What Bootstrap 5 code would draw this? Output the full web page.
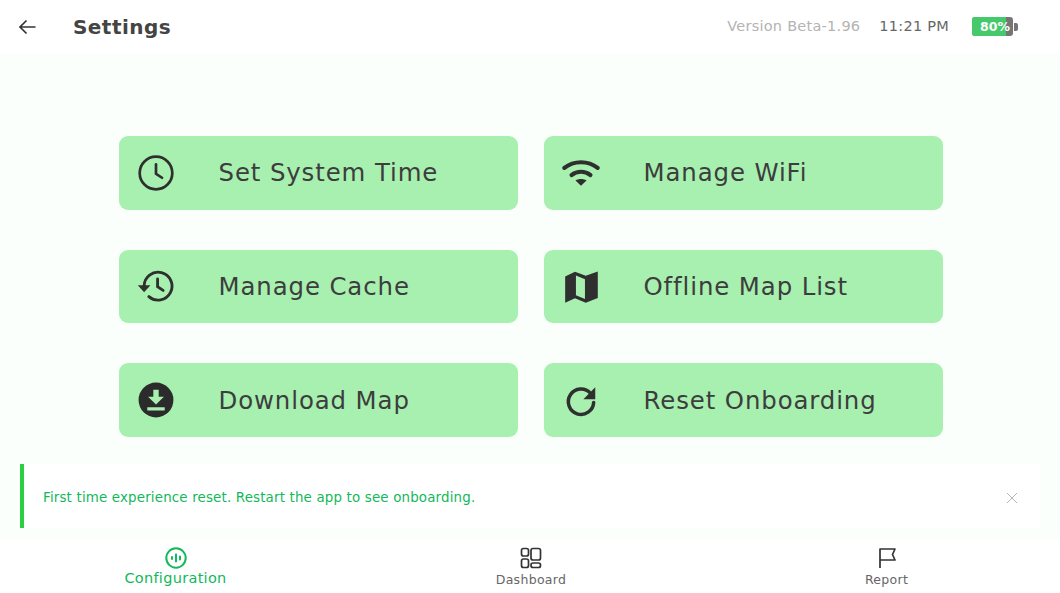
<!DOCTYPE html>
<html lang="en">
<head>
<meta charset="utf-8">
<title>Settings</title>
<link href="https://cdn.jsdelivr.net/npm/bootstrap@5.3.0/dist/css/bootstrap.min.css" rel="stylesheet">
<style>
html,body{height:593px;overflow:hidden}
body{font-family:"DejaVu Sans",sans-serif;background:#fbfffb;color:#3a3a3a}
.top-bar{height:53px;background:#fff;padding:0 42px 0 18px}
.top-title{font-size:20px;font-weight:700;color:#444;margin-left:37px;letter-spacing:.45px}
.ver{font-size:14.500px;color:#b3b3b3;letter-spacing:.25px}
.clock{font-size:14.500px;color:#666;margin-left:19px;letter-spacing:.25px}
.batt{margin-left:23px;width:46px;height:19px}
.batt-body{width:41px;height:19px;border-radius:3px;background:#757575;overflow:hidden}
.batt-fill{background:#46c96b;width:82%;height:100%}
.batt-text{color:#fff;font-size:12.500px;font-weight:700;left:8px;top:1px;line-height:17px}
.batt-tip{width:4px;height:8px;background:#757575;border-radius:0 2px 2px 0;margin-left:1px}
.main-area{height:487px}
.tile-grid{display:grid;grid-template-columns:399px 399px;grid-auto-rows:73.600px;gap:40px 26px;justify-content:center;padding-top:83px;padding-left:2px}
.tile{background:#a7f0b0;border-radius:9px;padding:0 0 0 18px;color:#3d3d3d;font-size:24.400px;letter-spacing:.9px;border:0;text-align:left}
.tile svg{flex:none;width:38px;height:38px}
.tile span{margin-left:43.500px;padding-top:2px}
.note{margin:27px 20px 0;height:64px;background:#fff;border-left:4px solid #2ccf3e;padding:5px 22px 0 19px;color:#12b85a;font-size:13.400px;letter-spacing:.17px}
.note svg{width:12px;height:12px}
.tabs{height:53px;background:#fff;padding-left:2px}
.tab{flex:none;color:#666;font-size:12.500px;letter-spacing:.3px;line-height:15px;width:355.500px;padding-top:6px}
.tab svg{width:24px;height:24px;margin-bottom:2px}
.tab.on{color:#12b85a;font-size:14.500px;line-height:17px}
.tab.on svg{margin-bottom:0}
</style>
</head>
<body>
<header class="top-bar d-flex align-items-center">
  <svg width="18" height="20" viewBox="0 0 18 20" fill="none" stroke="#333" stroke-width="1.700"><path d="M17.500 10H2M8.500 3.500 2 10l6.500 6.500"/></svg>
  <div class="top-title">Settings</div>
  <div class="ver ms-auto">Version Beta-1.96</div>
  <div class="clock">11:21 PM</div>
  <div class="batt d-flex align-items-center">
    <div class="batt-body position-relative">
      <div class="batt-fill"></div>
      <div class="batt-text position-absolute">80%</div>
    </div>
    <div class="batt-tip"></div>
  </div>
</header>
<main class="main-area">
  <div class="tile-grid">
    <button class="tile d-flex align-items-center">
      <svg viewBox="0 0 24 24" fill="none" stroke="#2f2f2f" stroke-width="1.700" stroke-linecap="round"><circle cx="12" cy="12" r="10.300"/><path d="M12 6.500v6l3.800 2.500"/></svg>
      <span>Set System Time</span>
    </button>
    <button class="tile d-flex align-items-center">
      <svg viewBox="0 0 24 24" fill="none" stroke="#2f2f2f" stroke-width="2.600" stroke-linecap="round"><path d="M1.500 8.800c6-4.800 15-4.800 21 0"/><path d="M6 13.300c3.500-2.800 8.500-2.800 12 0"/><path d="M12 20l-3.500-3.300c2-1.300 5-1.300 7 0z" fill="#2f2f2f" stroke="none"/></svg>
      <span>Manage WiFi</span>
    </button>
    <button class="tile d-flex align-items-center">
      <svg viewBox="0 0 24 24" fill="none" stroke="#2f2f2f" stroke-width="1.800"><path d="M4.500 12a8.800 8.800 0 1 1 3 6.700" stroke-linecap="round"/><path d="M.500 11.500h8l-4 4.500z" fill="#2f2f2f" stroke="none"/><path d="M13 7.500v5l3.500 2.300" stroke-linecap="round"/></svg>
      <span>Manage Cache</span>
    </button>
    <button class="tile d-flex align-items-center">
      <svg viewBox="0 0 24 24"><path d="M2 6 8.200 3 15 5.500 22.600 2.800V19.500L15 22.500 8.200 19.800 2 22.500z" fill="#2f2f2f"/><path d="M8.800 5.300l5.700 2.400v12.500l-5.700-2.300z" fill="#a7f0b0"/></svg>
      <span>Offline Map List</span>
    </button>
    <button class="tile d-flex align-items-center">
      <svg viewBox="0 0 24 24"><circle cx="12" cy="12" r="11" fill="#2b2b2b"/><path d="M10.300 5.500h3.400v4.500h3.300L12 14.800 7 10h3.300zM6.500 16.500h11v2.200h-11z" fill="#a7f0b0"/></svg>
      <span>Download Map</span>
    </button>
    <button class="tile d-flex align-items-center">
      <svg viewBox="0 0 24 24" fill="none" stroke="#2f2f2f" stroke-width="2.200"><path d="M18 7.800A8 8 0 1 0 20 13.500" stroke-linecap="round"/><path d="M21 4v7.500h-7.500z" fill="#2f2f2f" stroke="none"/></svg>
      <span>Reset Onboarding</span>
    </button>
  </div>
  <div class="note d-flex align-items-center justify-content-between">
    <div>First time experience reset. Restart the app to see onboarding.</div>
    <svg viewBox="0 0 12 12" fill="none" stroke="#b5b5b5" stroke-width="1"><path d="M1 1l10 10M11 1 1 11"/></svg>
  </div>
</main>
<nav class="tabs d-flex justify-content-center">
  <div class="tab on d-flex flex-column align-items-center justify-content-start">
    <svg viewBox="0 0 24 24" fill="none" stroke="#12b85a" stroke-width="2" stroke-linecap="round"><circle cx="12" cy="12" r="9.700"/><path d="M8 11v2M12 8.500v7M16 10.500v3"/></svg>
    <div>Configuration</div>
  </div>
  <div class="tab d-flex flex-column align-items-center justify-content-start">
    <svg viewBox="0 0 24 24" fill="none" stroke="#333" stroke-width="1.700"><rect x="2.500" y="2.500" width="7" height="7.500" rx="2"/><rect x="12" y="2.500" width="9.500" height="11.500" rx="2"/><rect x="2.500" y="13" width="7" height="8.500" rx="2"/><rect x="12" y="17" width="9.500" height="4.500" rx="2"/></svg>
    <div>Dashboard</div>
  </div>
  <div class="tab d-flex flex-column align-items-center justify-content-start">
    <svg viewBox="0 0 24 24" fill="none" stroke="#333" stroke-width="1.700" stroke-linejoin="round"><path d="M5 22V3h15l-2.500 5.500L20 14H5"/></svg>
    <div>Report</div>
  </div>
</nav>
<script src="https://cdn.jsdelivr.net/npm/bootstrap@5.3.0/dist/js/bootstrap.bundle.min.js"></script>
</body>
</html>
